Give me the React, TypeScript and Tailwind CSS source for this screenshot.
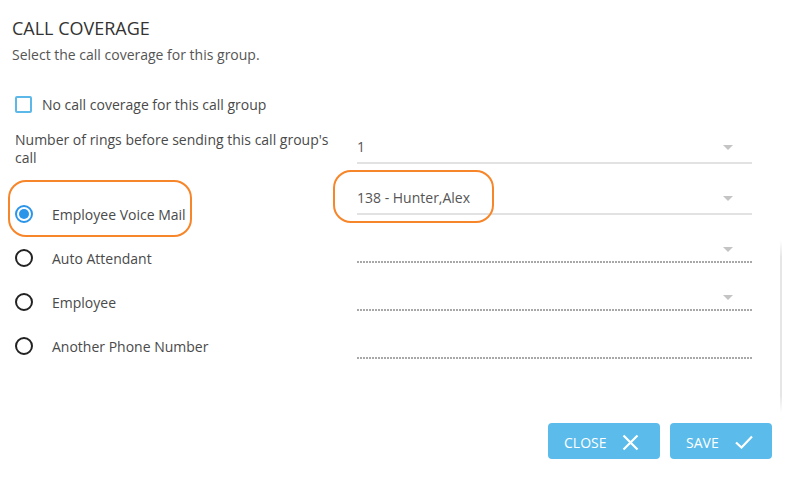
import React from 'react';

const font = { fontFamily: '"Open Sans", "Noto Sans", sans-serif' };

function Arrow() {
  return (
    <svg width="10" height="5" viewBox="0 0 10 5" className="shrink-0">
      <path d="M0 0 H10 L5 5 Z" fill="#c4c4c4" />
    </svg>
  );
}

function SolidSelect({ value, h }: { value: string; h: string }) {
  return (
    <div className={`flex flex-col justify-end ${h}`}>
      <div className="flex items-center justify-between pb-[5px] pr-[19px]">
        <span className="text-[14px] leading-5 text-[#555]">{value}</span>
        <Arrow />
      </div>
      <div className="h-[2px] bg-[#e2e2e2]" />
    </div>
  );
}

function DottedSelect({ arrow = true }: { arrow?: boolean }) {
  return (
    <div className="flex h-[48px] flex-col justify-end">
      <div className="flex h-5 items-center justify-end pb-[4px] pr-[19px]">{arrow && <Arrow />}</div>
      <div className="h-[2px] bg-[linear-gradient(to_right,#a8a8a8_2px,transparent_2px)] bg-[length:3px_2px] bg-repeat-x" />
    </div>
  );
}

function Radio({ label, checked = false }: { label: string; checked?: boolean }) {
  return (
    <div className="flex h-[44px] items-center gap-[19px]">
      <div
        className={`flex h-[18px] w-[18px] items-center justify-center rounded-full border-2 ${
          checked ? 'border-[#2b95e9]' : 'border-[#222]'
        }`}
      >
        {checked && <div className="h-[10px] w-[10px] rounded-full bg-[#2b95e9]" />}
      </div>
      <span className="text-[14px] text-[#4a4a4a]">{label}</span>
    </div>
  );
}

export default function App() {
  return (
    <div className="relative h-[501px] w-[793px] overflow-hidden bg-white" style={font}>
      <div className="px-3 pt-[16px]">
        <h1 className="text-[18px] leading-6 text-[#333]">CALL COVERAGE</h1>
        <p className="mt-[6px] text-[14px] leading-[18px] text-[#555]">Select the call coverage for this group.</p>

        {/* checkbox */}
        <div className="mt-[31px] flex h-[18px] items-center gap-[10px] pl-[3px]">
          <div className="h-[17px] w-[17px] rounded-[2px] border-2 border-[#5bb8e8]" />
          <span className="text-[14px] text-[#4a4a4a]">No call coverage for this call group</span>
        </div>

        <div className="mt-[18px] flex">
          {/* left column */}
          <div className="w-[345px] pl-[3px]">
            <p className="w-[325px] text-[14px] leading-[18px] text-[#4a4a4a]">
              Number of rings before sending this call group's call
            </p>
            <div className="mt-[25px]">
              <Radio label="Employee Voice Mail" checked />
              <Radio label="Auto Attendant" />
              <Radio label="Employee" />
              <Radio label="Another Phone Number" />
            </div>
          </div>

          {/* right column */}
          <div className="w-[395px]">
            <SolidSelect value="1" h="h-[33px]" />
            <SolidSelect value="138 - Hunter,Alex" h="h-[51px]" />
            <DottedSelect />
            <DottedSelect />
            <DottedSelect arrow={false} />
          </div>
        </div>
      </div>

      {/* buttons */}
      <div className="absolute bottom-[42px] right-[21px] flex gap-[10px]">
        <button className="flex h-[36px] w-[112px] items-center gap-[16px] rounded-[4px] bg-[#5bbbea] pl-[16px] pt-[2px] text-[14px] text-white">
          CLOSE
          <svg width="17" height="17" viewBox="0 0 17 17">
            <path d="M1.5 1.5 L15.5 15.5 M15.5 1.5 L1.5 15.5" stroke="white" strokeWidth="2.2" />
          </svg>
        </button>
        <button className="flex h-[36px] w-[102px] items-center gap-[16px] rounded-[4px] bg-[#5bbbea] pl-[16px] pt-[2px] text-[14px] text-white">
          SAVE
          <svg width="18" height="14" viewBox="0 0 18 14">
            <path d="M1 7.5 L6.5 12.5 L17 1.5" stroke="white" strokeWidth="2.2" fill="none" />
          </svg>
        </button>
      </div>

      {/* scroll edge */}
      <div className="absolute left-[780px] top-[240px] h-[173px] w-[2px] bg-[linear-gradient(to_bottom,transparent,#e6e6e6_10%,#e6e6e6_90%,transparent)]" />

      {/* annotation ovals */}
      <div className="absolute left-[8px] top-[180px] h-[57px] w-[184px] rounded-[18px] border-2 border-[#f7862a]" />
      <div className="absolute left-[333px] top-[170px] h-[53px] w-[161px] rounded-[18px] border-2 border-[#f7862a]" />
    </div>
  );
}
